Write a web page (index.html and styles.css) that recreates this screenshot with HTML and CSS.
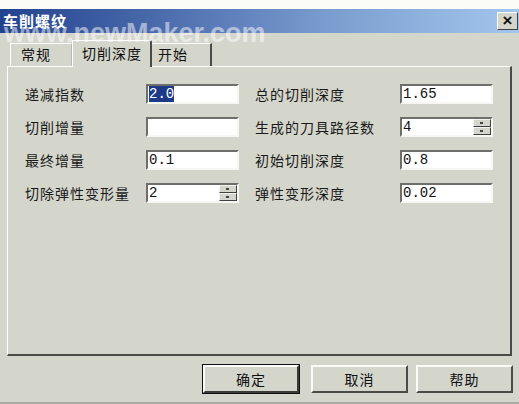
FILE: index.html
```html
<!DOCTYPE html>
<html>
<head>
<meta charset="utf-8">
<link rel="stylesheet" href="styles.css">
</head>
<body>
<div class="dialog">
  <div class="strip"></div>
  <div class="titlebar">
    <span class="title">车削螺纹</span>
    <span class="close">×</span>
  </div>
  <div class="content">
    <div class="tabs">
      <div class="tab">常规</div>
      <div class="tab active">切削深度</div>
      <div class="tab">开始</div>
    </div>
    <div class="panel">
      <div class="grid">
        <div class="label">递减指数</div>
        <div class="field"><span class="sel">2.0</span></div>
        <div></div>
        <div class="label">总的切削深度</div>
        <div class="field">1.65</div>

        <div class="label">切削增量</div>
        <div class="field"></div>
        <div></div>
        <div class="label">生成的刀具路径数</div>
        <div class="field spin"><span class="val">4</span><span class="btns"><span class="sb up"></span><span class="sb down"></span></span></div>

        <div class="label">最终增量</div>
        <div class="field">0.1</div>
        <div></div>
        <div class="label">初始切削深度</div>
        <div class="field">0.8</div>

        <div class="label">切除弹性变形量</div>
        <div class="field spin"><span class="val">2</span><span class="btns"><span class="sb up"></span><span class="sb down"></span></span></div>
        <div></div>
        <div class="label">弹性变形深度</div>
        <div class="field">0.02</div>
      </div>
    </div>
    <div class="buttons">
      <div class="btn default">确定</div>
      <div class="btn">取消</div>
      <div class="btn">帮助</div>
    </div>
  </div>
  <div class="watermark">www.newMaker.com</div>
</div>
</body>
</html>
```
FILE: styles.css
```css
html, body {
  margin: 0;
  padding: 0;
}
body {
  width: 519px;
  height: 404px;
  overflow: hidden;
  background: #d4d5cb;
  font-family: "Noto Sans CJK SC", "Liberation Sans", sans-serif;
}
.dialog {
  position: relative;
  width: 519px;
  height: 404px;
  background: #d4d5cb;
  box-sizing: border-box;
  border-bottom: 2px solid #a9aaa2;
}
.strip {
  height: 9px;
  background: #fbfbf8;
}
.titlebar {
  height: 24px;
  display: flex;
  align-items: center;
  justify-content: space-between;
  background: linear-gradient(to right, #23428e 0%, #4a6aac 30%, #7d9fd0 65%, #a3c6ee 100%);
  padding-left: 3px;
  padding-right: 1px;
}
.title {
  color: #fff;
  font-weight: bold;
  font-size: 15px;
  letter-spacing: 1px;
  line-height: 24px;
}
.close {
  width: 21px;
  height: 18px;
  box-sizing: border-box;
  background: #d4d5cb;
  border: 1px solid;
  border-color: #fff #404040 #404040 #fff;
  font-family: "Liberation Sans", sans-serif;
  font-weight: bold;
  font-size: 17px;
  line-height: 15px;
  text-align: center;
  color: #111;
}
.content {
  padding: 0 7px;
}
.tabs {
  height: 33px;
  display: flex;
  align-items: flex-end;
  padding-left: 3px;
  position: relative;
  z-index: 1;
}
.tab {
  box-sizing: border-box;
  height: 23px;
  width: 62px;
  border: 1px solid;
  border-color: #fff #5a5a55 transparent #fff;
  border-bottom: none;
  font-size: 14px;
  letter-spacing: 1px;
  line-height: 21px;
  padding-left: 10px;
  color: #111;
  margin-bottom: 0;
}
.tab:first-child {
  width: 62px;
  border-right-color: #b8b9b0;
}
.tab.active {
  height: 27px;
  width: 80px;
  margin-bottom: -1px;
  background: #d4d5cb;
  border-right: 2px solid #4a4a46;
  padding-left: 9px;
  line-height: 24px;
}
.tab:last-child {
  width: 60px;
  border-left: none;
  border-right: 2px solid #4a4a46;
  padding-left: 6px;
}
.panel {
  box-sizing: border-box;
  height: 290px;
  border: 1px solid;
  border-color: #fff #4a4a46 #4a4a46 #fff;
  border-bottom-width: 2px;
  border-right-width: 2px;
  padding: 17px 0 0 17px;
}
.grid {
  display: grid;
  grid-template-columns: 121px 93px 16px 145px 93px;
  grid-auto-rows: 20px;
  row-gap: 13px;
}
.label {
  font-size: 14px;
  letter-spacing: 1px;
  line-height: 20px;
  color: #1a1a1a;
  white-space: nowrap;
}
.field {
  box-sizing: border-box;
  height: 20px;
  background: #fff;
  border: 2px solid;
  border-color: #6e6e6a #f6f6f2 #f6f6f2 #6e6e6a;
  font-family: "Liberation Mono", monospace;
  font-size: 14px;
  line-height: 16px;
  padding-left: 1px;
  color: #111;
}
.sel {
  background: #1c3a86;
  color: #fff;
}
.spin {
  display: flex;
  padding-left: 1px;
}
.spin .val {
  flex: 1;
}
.btns {
  width: 18px;
  display: flex;
  flex-direction: column;
}
.sb {
  flex: 1;
  box-sizing: border-box;
  background: #d4d5cb;
  border: 1px solid;
  border-color: #f4f4f0 #404040 #404040 #f4f4f0;
  position: relative;
}
.sb::after {
  content: "";
  position: absolute;
  left: 6px;
  top: 2px;
  width: 3px;
  height: 2px;
  background: #444;
}
.buttons {
  display: flex;
  justify-content: flex-end;
  gap: 8px;
  padding-top: 9px;
  padding-right: 0;
  margin-right: -1px;
}
.btn {
  box-sizing: border-box;
  width: 97px;
  height: 28px;
  border: 2px solid;
  border-color: #fbfbf8 #4a4a46 #4a4a46 #fbfbf8;
  font-size: 14px;
  letter-spacing: 1px;
  line-height: 24px;
  text-align: center;
  color: #111;
}
.btn.default {
  outline: 1px solid #111;
  outline-offset: 0;
  border-color: #fbfbf8 #3a3a36 #3a3a36 #fbfbf8;
  width: 96px;
  margin-right: 4px;
}
.watermark {
  position: absolute;
  left: 4px;
  top: 18px;
  font-family: "Liberation Sans", sans-serif;
  font-weight: bold;
  font-size: 27px;
  line-height: 30px;
  color: rgba(255, 255, 255, 0.5);
  pointer-events: none;
  z-index: 5;
}
```
